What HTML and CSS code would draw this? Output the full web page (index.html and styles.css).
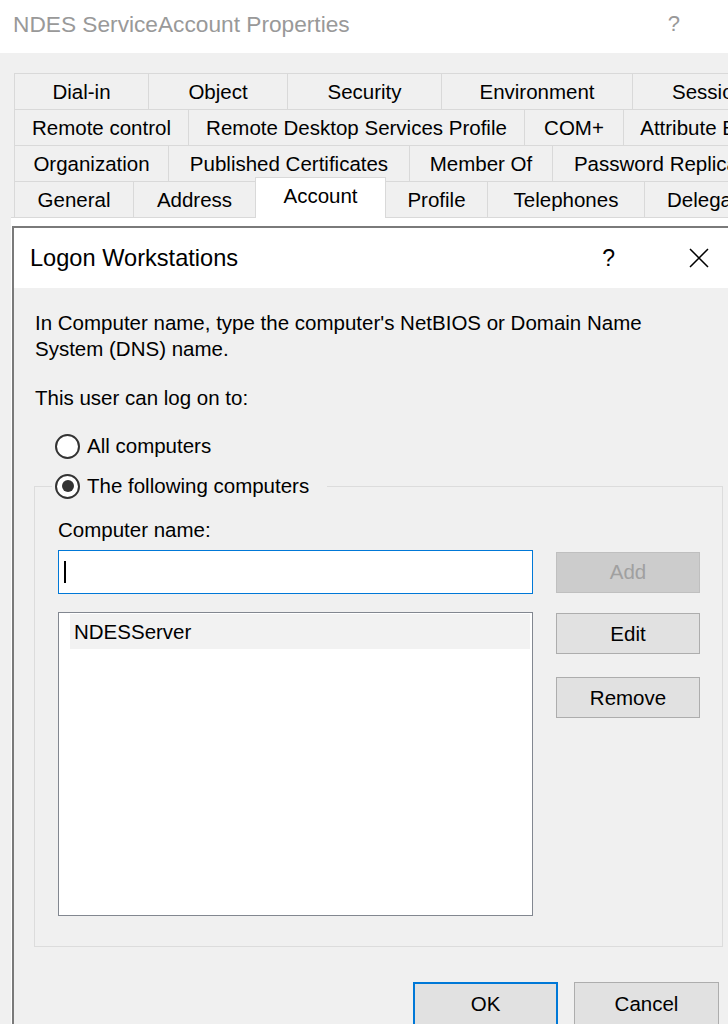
FILE: index.html
```html
<!DOCTYPE html>
<html lang="en">
<head>
    <meta charset="UTF-8">
    <meta name="viewport" content="width=device-width, initial-scale=1.0">
    <title>NDES ServiceAccount Properties</title>
    <link rel="stylesheet" href="styles.css">
</head>
<body>

    <div class="titlebar">
        <span class="caption">NDES ServiceAccount Properties</span>
        <span class="caption-help">?</span>
    </div>

    <div class="client">
        <!-- property sheet tabs, 4 rows -->
        <div class="tabs">
            <div class="tab-row">
                <div class="tab w134">Dial-in</div>
                <div class="tab w139">Object</div>
                <div class="tab w154">Security</div>
                <div class="tab w191">Environment</div>
                <div class="tab w153">Session</div>
            </div>
            <div class="tab-row">
                <div class="tab w174">Remote control</div>
                <div class="tab w336">Remote Desktop Services Profile</div>
                <div class="tab w99">COM+</div>
                <div class="tab w170">Attribute Editor</div>
            </div>
            <div class="tab-row">
                <div class="tab w154">Organization</div>
                <div class="tab w241">Published Certificates</div>
                <div class="tab w143">Member Of</div>
                <div class="tab w241">Password Replication</div>
            </div>
            <div class="tab-row">
                <div class="tab w119">General</div>
                <div class="tab w122">Address</div>
                <div class="tab w131 selected">Account</div>
                <div class="tab w102">Profile</div>
                <div class="tab w157">Telephones</div>
                <div class="tab w144">Delegation</div>
            </div>
        </div>

        <div class="panel">
            <div class="dialog">
                <div class="dlg-title">
                    <span class="dlg-caption">Logon Workstations</span>
                    <span class="dlg-help">?</span>
                    <svg class="dlg-close" width="20" height="20" viewBox="0 0 20 20">
                        <path d="M1 1 L19 19 M19 1 L1 19" stroke="#000" stroke-width="1.5" fill="none"/>
                    </svg>
                </div>

                <div class="dlg-body">
                    <p class="hint">In Computer name, type the computer's NetBIOS or Domain Name<br>System (DNS) name.</p>
                    <p class="hint gap">This user can log on to:</p>

                    <div class="option first">
                        <span class="radio"></span>
                        <span>All computers</span>
                    </div>

                    <fieldset class="group">
                        <legend class="option">
                            <span class="radio checked"></span>
                            <span>The following computers</span>
                        </legend>

                        <div class="field-label">Computer name:</div>
                        <div class="picker">
                            <div class="textbox"><span class="caret"></span></div>
                            <button class="btn disabled">Add</button>
                            <div class="listbox">
                                <div class="list-item">NDESServer</div>
                            </div>
                            <div class="side-buttons">
                                <button class="btn">Edit</button>
                                <button class="btn">Remove</button>
                            </div>
                        </div>
                    </fieldset>

                    <div class="actions">
                        <button class="btn wide default">OK</button>
                        <button class="btn wide">Cancel</button>
                    </div>
                </div>
            </div>
        </div>
    </div>

</body>
</html>
```

FILE: styles.css
```css
html, body {
    height: 1024px;
}
body {
    font-family: "Liberation Sans", Arial, sans-serif;
    font-size: 20.5px;
    color: #000;
    background-color: #f0f0f0;
    margin: 0;
    padding: 0;
    width: 728px;
    overflow: hidden;
}
.titlebar {
    height: 53px;
    background-color: #fff;
    display: flex;
    align-items: center;
    padding: 0 48px 5px 13px;
    box-sizing: border-box;
}
.caption {
    font-size: 22.7px;
    color: #999;
}
.caption-help {
    margin-left: auto;
    font-size: 22px;
    color: #999;
}
.client {
    padding: 20px 0 0 14px;
}
.tab-row {
    display: flex;
    height: 36px;
    white-space: nowrap;
}
.tab {
    flex: none;
    box-sizing: border-box;
    height: 36px;
    border-top: 1px solid #d9d9d9;
    border-left: 1px solid #d9d9d9;
    display: flex;
    align-items: center;
    justify-content: center;
    overflow: hidden;
}
.tab:last-child {
    border-right: 1px solid #d9d9d9;
}
.tab.selected {
    position: relative;
    z-index: 1;
    height: 41px;
    margin-top: -4px;
    background-color: #fff;
    border-right: 1px solid #d9d9d9;
    margin-right: -1px;
    padding-bottom: 4px;
}
.w99 { width: 99px; }
.w102 { width: 102px; }
.w119 { width: 119px; }
.w122 { width: 122px; }
.w131 { width: 131px; }
.w134 { width: 134px; }
.w139 { width: 139px; }
.w143 { width: 143px; }
.w144 { width: 144px; }
.w153 { width: 153px; }
.w154 { width: 154px; }
.w157 { width: 157px; }
.w170 { width: 170px; }
.w174 { width: 174px; }
.w191 { width: 191px; }
.w241 { width: 241px; }
.w336 { width: 336px; }

.panel {
    background-color: #fff;
    border-top: 1px solid #d9d9d9;
    margin-left: -3px;
    padding: 8px 0 0 1px;
}
.dialog {
    width: 740px;
    border: 2px solid #7a7a7a;
    border-right: none;
    border-bottom: none;
    background-color: #f0f0f0;
}
.dlg-title {
    height: 60px;
    background-color: #fff;
    display: flex;
    align-items: center;
    padding: 0 45px 0 16px;
}
.dlg-caption {
    font-size: 23.6px;
}
.dlg-help {
    margin-left: auto;
    font-size: 23px;
}
.dlg-close {
    margin-left: 74px;
}
.dlg-body {
    padding: 22px 0 0 21px;
}
.hint {
    margin: 0;
    line-height: 26px;
}
.hint.gap {
    margin-top: 23px;
}
.option {
    display: flex;
    align-items: center;
    gap: 7px;
    height: 30px;
}
.option.first {
    margin: 20px 0 0 20px;
}
.radio {
    width: 25px;
    height: 25px;
    box-sizing: border-box;
    border: 2px solid #333;
    border-radius: 50%;
    background-color: #fff;
    display: flex;
    align-items: center;
    justify-content: center;
}
.radio.checked::after {
    content: "";
    width: 12px;
    height: 12px;
    border-radius: 50%;
    background-color: #333;
}
.group {
    width: 689px;
    box-sizing: border-box;
    margin: 10px 0 0 -1px;
    padding: 17px 0 30px 23px;
    border: 1px solid #dcdcdc;
    min-inline-size: 0;
}
.group legend {
    margin-left: -6px;
    padding: 0 18px 0 3px;
}
.field-label {
    line-height: 24px;
    margin-bottom: 8px;
}
.picker {
    display: grid;
    grid-template-columns: 475px 144px;
    column-gap: 23px;
    row-gap: 18px;
}
.textbox {
    height: 44px;
    box-sizing: border-box;
    border: 1px solid #0078d7;
    background-color: #fff;
    display: flex;
    align-items: center;
}
.caret {
    width: 2px;
    height: 22px;
    margin-left: 5px;
    background-color: #000;
}
.listbox {
    height: 304px;
    box-sizing: border-box;
    border: 1px solid #828790;
    background-color: #fff;
    padding: 1px 2px 0 11px;
}
.list-item {
    height: 35px;
    line-height: 35px;
    padding-left: 4px;
    background-color: #f2f2f2;
}
.side-buttons {
    display: flex;
    flex-direction: column;
    gap: 23px;
    padding-top: 1px;
}
.btn {
    font-family: inherit;
    font-size: 20.5px;
    color: #000;
    height: 41px;
    width: 144px;
    box-sizing: border-box;
    background-color: #e1e1e1;
    border: 1px solid #adadad;
    border-radius: 0;
    padding: 0;
}
.picker > .btn {
    align-self: center;
}
.btn.disabled {
    background-color: #cccccc;
    border-color: #bfbfbf;
    color: #a0a0a0;
}
.btn.wide {
    width: 145px;
    height: 44px;
}
.btn.default {
    border: 2px solid #0078d7;
}
.actions {
    display: flex;
    justify-content: flex-end;
    gap: 16px;
    width: 684px;
    margin-top: 35px;
}
```
